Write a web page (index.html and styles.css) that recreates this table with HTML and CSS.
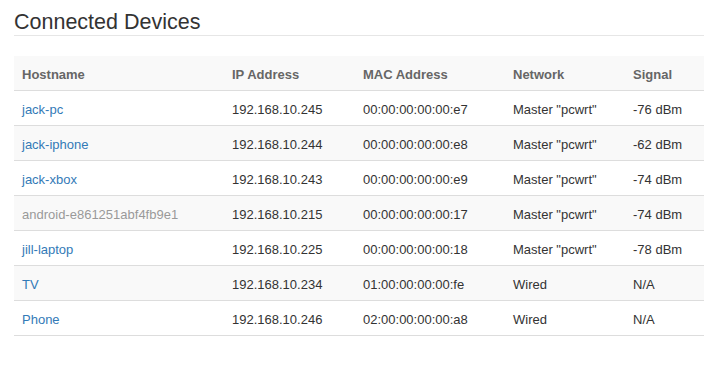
FILE: index.html
```html
<!DOCTYPE html>
<html>
<head>
<meta charset="utf-8">
<link rel="stylesheet" href="styles.css">
</head>
<body>
<div class="container">
  <h2 class="page-title">Connected Devices</h2>
  <table class="devices">
    <thead>
      <tr>
        <th class="c-host">Hostname</th>
        <th class="c-ip">IP Address</th>
        <th class="c-mac">MAC Address</th>
        <th class="c-net">Network</th>
        <th class="c-sig">Signal</th>
      </tr>
    </thead>
    <tbody>
      <tr><td><a class="host">jack-pc</a></td><td>192.168.10.245</td><td>00:00:00:00:00:e7</td><td>Master "pcwrt"</td><td>-76 dBm</td></tr>
      <tr><td><a class="host">jack-iphone</a></td><td>192.168.10.244</td><td>00:00:00:00:00:e8</td><td>Master "pcwrt"</td><td>-62 dBm</td></tr>
      <tr><td><a class="host">jack-xbox</a></td><td>192.168.10.243</td><td>00:00:00:00:00:e9</td><td>Master "pcwrt"</td><td>-74 dBm</td></tr>
      <tr><td><span class="host muted">android-e861251abf4fb9e1</span></td><td>192.168.10.215</td><td>00:00:00:00:00:17</td><td>Master "pcwrt"</td><td>-74 dBm</td></tr>
      <tr><td><a class="host">jill-laptop</a></td><td>192.168.10.225</td><td>00:00:00:00:00:18</td><td>Master "pcwrt"</td><td>-78 dBm</td></tr>
      <tr><td><a class="host">TV</a></td><td>192.168.10.234</td><td>01:00:00:00:00:fe</td><td>Wired</td><td>N/A</td></tr>
      <tr><td><a class="host">Phone</a></td><td>192.168.10.246</td><td>02:00:00:00:00:a8</td><td>Wired</td><td>N/A</td></tr>
    </tbody>
  </table>
</div>
</body>
</html>
```
FILE: styles.css
```css
html, body {
  margin: 0;
  padding: 0;
  background: #fff;
}
body {
  font-family: "Liberation Sans", Arial, sans-serif;
  font-size: 13px;
  line-height: 18px;
  color: #333;
}
.container {
  margin: 0 22px 0 14px;
}
.page-title {
  margin: 0;
  padding: 12px 0 2px;
  font-size: 21.5px;
  line-height: 21px;
  font-weight: normal;
  color: #333;
  border-bottom: 1px solid #e6e6e6;
}
.devices {
  width: 100%;
  margin-top: 20px;
  border-collapse: collapse;
  border-spacing: 0;
}
.devices th,
.devices td {
  padding: 10px 8px 6px;
  text-align: left;
  vertical-align: top;
  border-bottom: 1px solid #ddd;
  white-space: nowrap;
}
.devices th {
  font-weight: bold;
  color: #666;
}
.devices thead tr,
.devices tbody tr:nth-child(even) {
  background: #f9f9f9;
}
.c-host { width: 194px; }
.c-ip { width: 115px; }
.c-mac { width: 134px; }
.c-net { width: 104px; }
.host {
  color: #337ab7;
  text-decoration: none;
}
.host.muted {
  color: #999;
}
```
